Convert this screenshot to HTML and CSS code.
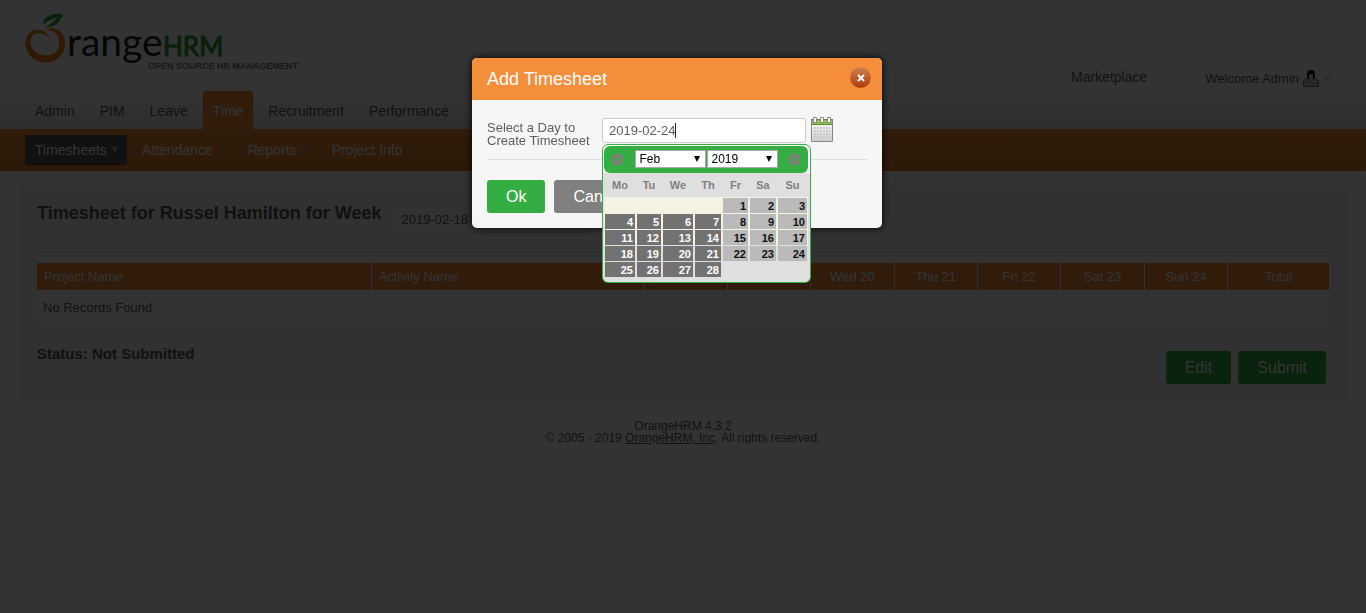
FILE: index.html
```html
<!DOCTYPE html>
<html lang="en">
<head>
<meta charset="utf-8">
<title>OrangeHRM</title>
<link rel="stylesheet" href="styles.css">
</head>
<body>
<header class="header">
  <svg class="logo" width="282" height="62" viewBox="0 0 282 62" role="img" aria-label="OrangeHRM">
    <path fill="#2f9a3f" d="M18 12C18 4 25 0 38 1C34 11 29 14.500 21 14C25 12 29 8 33 4C27 6 22 8 18 12Z"/>
    <path fill="#ee7d12" d="M24 24C21 18 14 15 8 17.500C1 21 -1 30 1.500 37C5 45 12 49.500 20.500 49.500C30 49.500 37 44 39.500 35C42 26 37 16 29 15.500C26 15 23 15.500 21 16.500C28 17.500 33 20 34 27C35 36 31 42.500 21.500 42.500C12 42.500 6.500 37 5.500 30C5 23 9 19.500 14 20C18 20.500 21 21.500 24 24Z"/>
    <text class="logo-range" x="42" y="43">range</text>
    <text class="logo-hrm" x="138" y="43">HRM</text>
    <text class="logo-tag" x="123" y="56">OPEN SOURCE HR MANAGEMENT</text>
  </svg>
  <div class="header-links">
    <a class="marketplace" href="#">Marketplace</a>
    <a class="welcome" href="#">Welcome Admin
      <svg width="16" height="17" viewBox="0 0 16 17" aria-hidden="true"><path d="M.5 16.500V12Q.5 9 5 8.500H11Q15.500 9 15.500 12V16.500Z" fill="#c8c8c8" stroke="#666"/><path d="M4 7V4Q4 0 8 0T12 4V7L10 9H6Z" fill="#111"/><path d="M6 4.500Q8 3.500 10 4.500V7.500Q8 11 6 7.500Z" fill="#ddd"/></svg>
      <span class="arrow arrow-pale"></span>
    </a>
  </div>
</header>
<nav class="menu">
  <a class="tab" href="#">Admin</a>
  <a class="tab" href="#">PIM</a>
  <a class="tab" href="#">Leave</a>
  <a class="tab tab-active" href="#">Time</a>
  <a class="tab" href="#">Recruitment</a>
  <a class="tab" href="#">Performance</a>
</nav>
<nav class="submenu">
  <a class="sub sub-active" href="#">Timesheets<span class="arrow"></span></a>
  <a class="sub" href="#">Attendance<span class="arrow"></span></a>
  <a class="sub" href="#">Reports<span class="arrow"></span></a>
  <a class="sub" href="#">Project Info<span class="arrow"></span></a>
</nav>
<main class="box">
  <div class="title-row">
    <h1 class="title"><label for="week">Timesheet for Russel Hamilton for Week</label></h1>
    <select class="week" id="week"><option>2019-02-18</option></select>
  </div>
  <div class="table-area">
    <table class="records">
      <thead>
        <tr><th class="c-project">Project Name</th><th class="c-activity">Activity Name</th><th class="c-day"></th><th class="c-day"></th><th class="c-day">Wed 20</th><th class="c-day">Thu 21</th><th class="c-day">Fri 22</th><th class="c-day">Sat 23</th><th class="c-day">Sun 24</th><th class="c-total">Total</th></tr>
      </thead>
      <tbody><tr><td colspan="10">No Records Found</td></tr></tbody>
    </table>
  </div>
  <div class="bottom-row">
    <h2 class="status">Status: Not Submitted</h2>
    <div class="actions">
      <button class="btn" type="button">Edit</button>
      <button class="btn" type="button">Submit</button>
    </div>
  </div>
</main>
<footer class="footer">OrangeHRM 4.3.2<br>© 2005 - 2019 <a href="#">OrangeHRM, Inc</a>. All rights reserved.</footer>

<div class="overlay">
  <section class="dialog" role="dialog" aria-labelledby="dialog-title">
    <div class="dialog-head">
      <h2 class="dialog-title" id="dialog-title">Add Timesheet</h2>
      <button class="close" type="button" aria-label="Close"><svg width="8" height="8" viewBox="0 0 8 8"><path d="M1 1L7 7M7 1L1 7" stroke="#fff" stroke-width="2"/></svg></button>
    </div>
    <form class="dialog-body">
      <div class="field-row">
        <label class="field-label" for="day">Select a Day to Create Timesheet</label>
        <div class="field">
          <input class="date" id="day" type="text" value="2019-02-24">
          <span class="caret"></span>
          <div class="picker">
            <div class="picker-head">
              <button class="step" type="button" aria-label="Previous"><svg width="13" height="13" viewBox="0 0 13 13"><circle cx="6.500" cy="6.500" r="6" fill="#808078"/><path d="M8 3V10L4 6.500Z" fill="#34ae42"/></svg></button>
              <div class="picker-selects">
                <span class="pick"><select aria-label="Month"><option>Feb</option></select></span>
                <span class="pick"><select aria-label="Year"><option>2019</option></select></span>
              </div>
              <button class="step" type="button" aria-label="Next"><svg width="13" height="13" viewBox="0 0 13 13"><circle cx="6.500" cy="6.500" r="6" fill="#808078"/><path d="M5 3V10L9 6.500Z" fill="#34ae42"/></svg></button>
            </div>
            <table class="days">
              <colgroup><col class="w32"><col class="w26"><col class="w32"><col class="w28"><col class="w27"><col class="w28"><col class="w31"></colgroup>
              <thead><tr><th>Mo</th><th>Tu</th><th>We</th><th>Th</th><th>Fr</th><th>Sa</th><th>Su</th></tr></thead>
              <tbody>
                <tr><td></td><td></td><td></td><td></td><td><a class="light" href="#">1</a></td><td><a class="light" href="#">2</a></td><td><a class="light" href="#">3</a></td></tr>
                <tr><td><a href="#">4</a></td><td><a href="#">5</a></td><td><a href="#">6</a></td><td><a href="#">7</a></td><td><a class="light" href="#">8</a></td><td><a class="light" href="#">9</a></td><td><a class="light" href="#">10</a></td></tr>
                <tr><td><a href="#">11</a></td><td><a href="#">12</a></td><td><a href="#">13</a></td><td><a href="#">14</a></td><td><a class="light" href="#">15</a></td><td><a class="light" href="#">16</a></td><td><a class="light" href="#">17</a></td></tr>
                <tr class="late"><td><a href="#">18</a></td><td><a href="#">19</a></td><td><a href="#">20</a></td><td><a href="#">21</a></td><td><a class="light" href="#">22</a></td><td><a class="light" href="#">23</a></td><td><a class="light" href="#">24</a></td></tr>
                <tr class="late"><td><a href="#">25</a></td><td><a href="#">26</a></td><td><a href="#">27</a></td><td><a href="#">28</a></td><td></td><td></td><td></td></tr>
              </tbody>
            </table>
          </div>
        </div>
        <button class="cal-btn" type="button" aria-label="Open calendar"><svg width="22" height="25" viewBox="0 0 22 25"><defs><linearGradient id="sheet" x2="0" y2="1"><stop offset="0" stop-color="#fff"/><stop offset="1" stop-color="#ccc"/></linearGradient></defs><path d="M.5 2.500H21.500V24.500H.5Z" fill="url(#sheet)" stroke="#888"/><path d="M1 3H21V7H1Z" fill="#8cc152"/><path d="M0 2.500H22M0 7.500H22" stroke="#5f8f2f"/><g fill="#fff" stroke="#888"><path d="M2.500 .5H5.500V5.500H2.500ZM9.500 .5H12.500V5.500H9.500ZM16.500 .5H19.500V5.500H16.500Z"/></g><path d="M3 11H19M3 14H19M3 17H19M3 20H19" stroke="#ccc" stroke-width="2" stroke-dasharray="2 1"/></svg></button>
      </div>
      <div class="dialog-actions">
        <button class="btn" type="button">Ok</button>
        <button class="btn btn-grey" type="button">Cancel</button>
      </div>
    </form>
  </section>
</div>
</body>
</html>
```

FILE: styles.css
```css
* { box-sizing: border-box; }
body {
  margin: 0;
  background: #fff;
  color: #5d5d5d;
  font-family: "Liberation Sans", Arial, sans-serif;
  font-size: 14px;
}
a { color: inherit; text-decoration: none; }
h1, h2 { margin: 0; }
button { font: inherit; border: 0; padding: 0; }

.header { display: flex; justify-content: space-between; height: 91px; padding: 13px 35px 0 25px; }
.logo-range { font: 400 39px Lato, sans-serif; fill: #222; }
.logo-hrm { font: 400 26px Lato, sans-serif; fill: #2a9a3a; stroke: #2a9a3a; }
.logo-tag { font: bold 9px "Liberation Sans", Arial, sans-serif; fill: #777; }
.header-links { display: flex; align-items: flex-start; gap: 58px; padding-top: 56px; }
.marketplace { line-height: 16px; }
.welcome { display: flex; align-items: center; gap: 4px; font-size: 13px; line-height: 19px; }
.arrow { border: 3px solid transparent; border-top: 6px solid #9a9a9a; border-bottom: 0; }
.arrow-pale { border-top-color: #d4d4d4; border-left-width: 4px; border-right-width: 4px; }

.menu { display: flex; gap: 5px; padding: 0 25px; background: linear-gradient(#fff, #e4e4e4); }
.tab { padding: 0 10px; line-height: 40px; height: 38px; }
.tab-active { background: #f28c38; color: #fff; border-radius: 3px 3px 0 0; }
.submenu { display: flex; gap: 5px; padding: 6px 25px; background: linear-gradient(#f28c38, #e07b28); }
.sub { display: flex; align-items: center; gap: 5px; height: 30px; padding: 0 9px 0 10px; color: #fff; border-radius: 3px; }
.sub .arrow { border-top-color: #c09a78; }
.sub-active { background: #565656; }
.sub-active .arrow { border-top-color: #aaa; }

.box { margin: 15px 20px 0; padding: 17px 16px 15px; border: 1px solid #dedede; border-radius: 3px; background: #f6f6f6; }
.title-row { display: flex; align-items: flex-start; gap: 9px; height: 47px; }
.title { font-size: 18px; line-height: 18px; color: #555; }
.week { width: 200px; height: 28px; margin-top: 1px; padding: 0 10px; border: 1px solid #dedede; border-radius: 3px; background: #f8f8f8; color: #5d5d5d; font: inherit; font-size: 13px; appearance: none; }
.table-area { padding: 11px 0; border-top: 1px solid #dedede; border-bottom: 1px solid #dedede; }
.records { width: 100%; table-layout: fixed; border-collapse: separate; border-spacing: 0; }
.records th { height: 27px; padding: 0 6px; background: #f28c38; color: #fff; font-size: 13px; font-weight: normal; border-right: 1px solid #fff; }
.records th.c-project, .records th.c-activity { padding-left: 7px; text-align: left; }
.records th.c-total { border-right: 0; }
.c-project { width: 25.9%; }
.c-activity { width: 21.1%; }
.c-total { width: 7.8%; }
.records td { height: 34px; padding: 0 6px; font-size: 13px; background: #fafafa; }
.bottom-row { display: flex; justify-content: space-between; padding-top: 9px; }
.status { font-size: 15px; line-height: 17px; color: #555; }
.actions { display: flex; gap: 7px; padding: 6px 3px 0 0; }
.btn { height: 33px; padding: 0 19px; border-radius: 3px; background: #34ae42; color: #fff; font-size: 16px; }
.btn-grey { background: #808080; }
.footer { padding-top: 20px; text-align: center; font-size: 12px; line-height: 12px; }
.footer a { text-decoration: underline; }

.overlay { position: fixed; inset: 0; display: flex; justify-content: center; align-items: flex-start; padding: 58px 12px 0 0; background: rgba(0, 0, 0, .8); }
.dialog { width: 410px; border-radius: 5px; background: #f6f6f6; box-shadow: 0 0 8px #000; }
.dialog-head { display: flex; justify-content: space-between; align-items: center; height: 42px; padding: 0 11px 0 15px; border-radius: 5px 5px 0 0; background: #f58e3a; color: #fff; }
.dialog-title { font-size: 18px; font-weight: normal; }
.close { display: flex; align-items: center; justify-content: center; width: 21px; height: 21px; margin-bottom: 3px; border-radius: 50%; background: linear-gradient(#cf8055, #b13a0c); }
.dialog-body { padding: 17px 15px 15px; }
.field-row { display: flex; align-items: flex-start; height: 43px; border-bottom: 1px solid #dedede; }
.field-label { width: 115px; padding: 4px 8px 0 0; font-size: 13px; line-height: 13px; }
.field { position: relative; width: 204px; margin: 1px 5px 0 0; }
.date { display: block; width: 100%; height: 25px; padding: 0 6px; border: 1px solid #ccc; border-radius: 3px; background: #fff; color: #5d5d5d; font: inherit; font-size: 13px; outline: 0; }
.caret { position: absolute; left: 73px; top: 5px; width: 1px; height: 15px; background: #222; }
.cal-btn { height: 25px; background: none; }
.cal-btn svg { display: block; }
.dialog-actions { display: flex; gap: 9px; padding-top: 20px; }

.picker { position: absolute; left: 0; top: 26px; width: 209px; padding: 1px 2px 5px 1px; border: 1px solid #34ae42; border-radius: 6px; background: linear-gradient(#fff 28px, #dfdfdf 28px); }
.picker-head { display: flex; align-items: center; justify-content: space-between; height: 27px; padding: 0 7px; border-radius: 6px; background: #34ae42; }
.picker-selects { display: flex; gap: 1px; padding-bottom: 2px; }
.step { display: flex; background: none; }
.pick { position: relative; }
.pick select { display: block; width: 71px; height: 18px; padding: 0 4px; border: 1px solid #a9a9a9; border-radius: 0; background: #fff; color: #000; font: 12px "Liberation Sans", Arial, sans-serif; appearance: none; }
.pick::after { content: ""; position: absolute; right: 6px; top: 6px; border: 3px solid transparent; border-top: 6px solid #000; border-bottom: 0; pointer-events: none; }
.days { width: 100%; table-layout: fixed; border-collapse: collapse; background: #f5f2e3; font-size: 11px; font-weight: bold; }
.days th { height: 24px; padding: 0; background: #dfdfdf; color: #808080; }
.days td { height: 16px; padding: 1px 1px 0; }
.days td a { display: block; height: 15px; padding-right: 2px; line-height: 16px; text-align: right; background: #727272; color: #fff; }
.days td .light { background: #bababa; color: #111; }
.late { background: #dfdfdf; }
.w26 { width: 26px; }
.w27 { width: 27px; }
.w28 { width: 28px; }
.w31 { width: 31px; }
.w32 { width: 32px; }
```
